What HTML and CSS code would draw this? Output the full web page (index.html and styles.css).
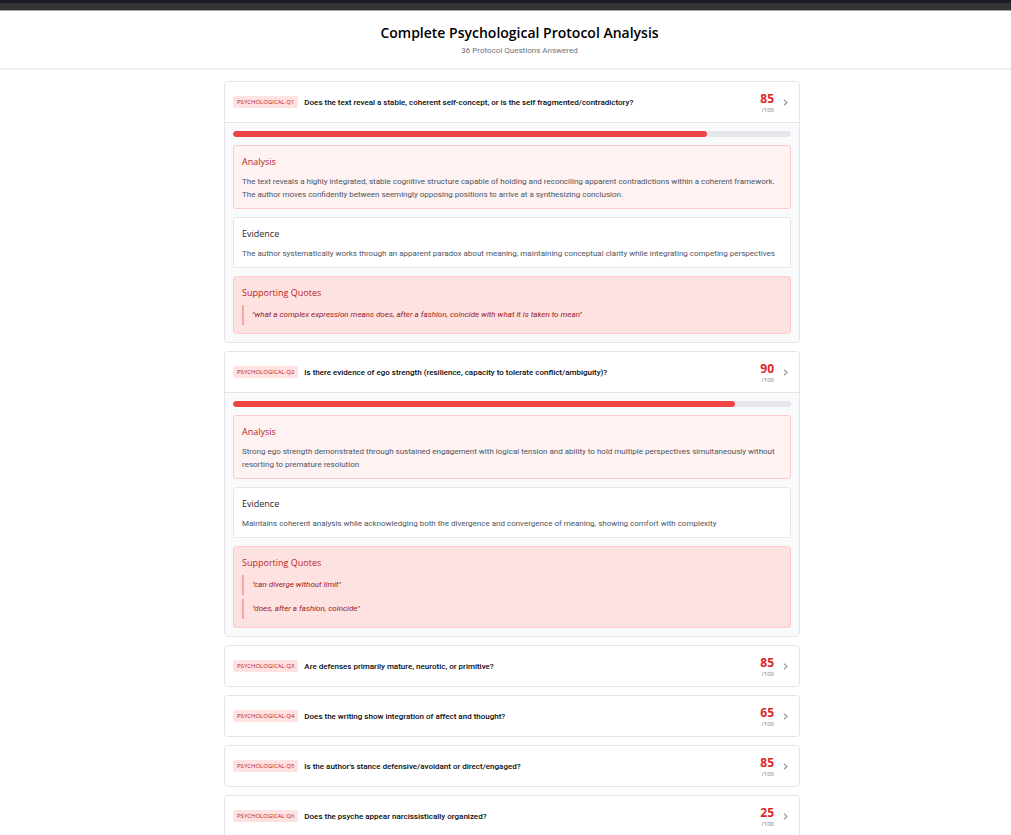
FILE: index.html
```
<!DOCTYPE html>
<html lang="en">
<head>
<meta charset="utf-8">
<meta name="viewport" content="width=device-width, initial-scale=1">
<title>Complete Psychological Protocol Analysis</title>
<link rel="stylesheet" href="styles.css">
</head>
<body>
<div class="backdrop"></div>
<header class="page-header">
  <h1 class="page-title">Complete Psychological Protocol Analysis</h1>
  <p class="page-subtitle">36 Protocol Questions Answered</p>
</header>
<main class="content">
  <div class="card-list">
    <article class="card">
      <button class="card-head" type="button" aria-expanded="true">
        <span class="badge">PSYCHOLOGICAL Q1</span>
        <span class="question">Does the text reveal a stable, coherent self-concept, or is the self fragmented/contradictory?</span>
        <span class="score"><span class="score-value">85</span><span class="score-max">/100</span></span>
        <svg class="chevron" viewBox="0 0 8 8" aria-hidden="true"><path d="M3 2 5 4 3 6"/></svg>
      </button>
      <div class="card-body">
        <div class="meter"><div class="meter-fill" style="width:85%"></div></div>
        <section class="panel panel-analysis">
          <h2 class="panel-title">Analysis</h2>
          <p class="panel-text">The text reveals a highly integrated, stable cognitive structure capable of holding and reconciling apparent contradictions within a coherent framework. The author moves confidently between seemingly opposing positions to arrive at a synthesizing conclusion.</p>
        </section>
        <section class="panel">
          <h2 class="panel-title">Evidence</h2>
          <p class="panel-text">The author systematically works through an apparent paradox about meaning, maintaining conceptual clarity while integrating competing perspectives</p>
        </section>
        <section class="panel panel-quotes">
          <h2 class="panel-title">Supporting Quotes</h2>
          <div class="quotes">
            <blockquote class="quote">"what a complex expression means does, after a fashion, coincide with what it is taken to mean"</blockquote>
          </div>
        </section>
      </div>
    </article>
    <article class="card">
      <button class="card-head" type="button" aria-expanded="true">
        <span class="badge">PSYCHOLOGICAL Q2</span>
        <span class="question">Is there evidence of ego strength (resilience, capacity to tolerate conflict/ambiguity)?</span>
        <span class="score"><span class="score-value">90</span><span class="score-max">/100</span></span>
        <svg class="chevron" viewBox="0 0 8 8" aria-hidden="true"><path d="M3 2 5 4 3 6"/></svg>
      </button>
      <div class="card-body">
        <div class="meter"><div class="meter-fill" style="width:90%"></div></div>
        <section class="panel panel-analysis">
          <h2 class="panel-title">Analysis</h2>
          <p class="panel-text">Strong ego strength demonstrated through sustained engagement with logical tension and ability to hold multiple perspectives simultaneously without resorting to premature resolution</p>
        </section>
        <section class="panel">
          <h2 class="panel-title">Evidence</h2>
          <p class="panel-text">Maintains coherent analysis while acknowledging both the divergence and convergence of meaning, showing comfort with complexity</p>
        </section>
        <section class="panel panel-quotes">
          <h2 class="panel-title">Supporting Quotes</h2>
          <div class="quotes">
            <blockquote class="quote">"can diverge without limit"</blockquote>
            <blockquote class="quote">"does, after a fashion, coincide"</blockquote>
          </div>
        </section>
      </div>
    </article>
    <article class="card">
      <button class="card-head" type="button" aria-expanded="false">
        <span class="badge">PSYCHOLOGICAL Q3</span>
        <span class="question">Are defenses primarily mature, neurotic, or primitive?</span>
        <span class="score"><span class="score-value">85</span><span class="score-max">/100</span></span>
        <svg class="chevron" viewBox="0 0 8 8" aria-hidden="true"><path d="M3 2 5 4 3 6"/></svg>
      </button>
    </article>
    <article class="card">
      <button class="card-head" type="button" aria-expanded="false">
        <span class="badge">PSYCHOLOGICAL Q4</span>
        <span class="question">Does the writing show integration of affect and thought?</span>
        <span class="score"><span class="score-value">65</span><span class="score-max">/100</span></span>
        <svg class="chevron" viewBox="0 0 8 8" aria-hidden="true"><path d="M3 2 5 4 3 6"/></svg>
      </button>
    </article>
    <article class="card">
      <button class="card-head" type="button" aria-expanded="false">
        <span class="badge">PSYCHOLOGICAL Q5</span>
        <span class="question">Is the author's stance defensive/avoidant or direct/engaged?</span>
        <span class="score"><span class="score-value">85</span><span class="score-max">/100</span></span>
        <svg class="chevron" viewBox="0 0 8 8" aria-hidden="true"><path d="M3 2 5 4 3 6"/></svg>
      </button>
    </article>
    <article class="card">
      <button class="card-head" type="button" aria-expanded="false">
        <span class="badge">PSYCHOLOGICAL Q6</span>
        <span class="question">Does the psyche appear narcissistically organized?</span>
        <span class="score"><span class="score-value">25</span><span class="score-max">/100</span></span>
        <svg class="chevron" viewBox="0 0 8 8" aria-hidden="true"><path d="M3 2 5 4 3 6"/></svg>
      </button>
    </article>
  </div>
</main>
</body>
</html>
```
FILE: styles.css
```
* { box-sizing: border-box; }
html { height: 100%; overflow: hidden; }
body {
  margin: 0;
  height: 100%;
  overflow: hidden;
  background: #fff;
  color: #09090b;
  font-family: "Open Sans", "Noto Sans", sans-serif;
  font-size: 8px;
  line-height: 13px;
}
h1, h2, p, blockquote { margin: 0; }

.backdrop {
  height: 11px;
  background: #333;
  border-top: 3px solid #1a1c26;
  border-bottom: 1px solid #a3a3a3;
}
.page-header {
  padding: 12px 0 11px 28px;
  border-bottom: 2px solid #eeeff1;
  text-align: center;
}
.page-title { font-size: 14px; line-height: 20px; font-weight: 600; color: #000; }
.page-subtitle { color: #6b7280; font-family: Roboto, sans-serif; line-height: 12px; margin-top: 2px; }

.content { padding: 11px 0 12px 13px; }
.card-list {
  display: flex;
  flex-direction: column;
  gap: 8px;
  max-width: 576px;
  margin: 0 auto;
}
.card {
  border: 1px solid #e4e4e7;
  border-radius: 4px;
  background: #fff;
  overflow: hidden;
}
.card-head {
  display: flex;
  align-items: center;
  gap: 6px;
  width: 100%;
  height: 40px;
  padding: 0 8px;
  border: 0;
  background: #fff;
  color: inherit;
  font: inherit;
  text-align: left;
  cursor: pointer;
}
.badge {
  padding: 0 4px;
  border-radius: 2px;
  background: #fee2e2;
  color: #b91c1c;
  font-size: 6px;
  line-height: 12px;
  white-space: nowrap;
}
.question { flex: 1; font-family: Roboto, sans-serif; font-weight: 500; }
.score { display: flex; flex-direction: column; align-items: flex-end; }
.score-value { color: #dc2626; font-size: 12px; line-height: 16px; font-weight: 700; }
.score-max { color: #6b7280; font-size: 6px; line-height: 6px; }
.chevron {
  width: 11px;
  height: 11px;
  fill: none;
  stroke: #9ca3af;
  stroke-width: 1;
}

.card-body {
  display: flex;
  flex-direction: column;
  gap: 8px;
  padding: 8px;
  border-top: 1px solid #e4e4e7;
  background: #f9fafb;
}
.meter { height: 6px; border-radius: 3px; background: #e5e7eb; overflow: hidden; }
.meter-fill { height: 100%; border-radius: 3px; background: #ef4444; }
.panel {
  display: flex;
  flex-direction: column;
  gap: 4px;
  padding: 8px;
  border: 1px solid #e5e7eb;
  border-radius: 3px;
  background: #fff;
  color: #1f2937;
}
.panel-title { font-size: 9px; line-height: 16px; font-weight: 500; }
.panel-text {
  margin: 1px 0 -1px;
  color: #4b5563;
  font-family: Roboto, sans-serif;
}
.panel-analysis { background: #fef2f2; border-color: #fecaca; }
.panel-quotes { background: #fee2e2; border-color: #fecaca; }
.panel-analysis .panel-title, .panel-quotes .panel-title { color: #b91c1c; }
.quotes { display: flex; flex-direction: column; gap: 4px; }
.quote {
  padding: 4px 8px;
  border-left: 2px solid #fca5a5;
  color: #991b1b;
  font-family: Roboto, sans-serif;
  font-style: italic;
  line-height: 12px;
}
```
